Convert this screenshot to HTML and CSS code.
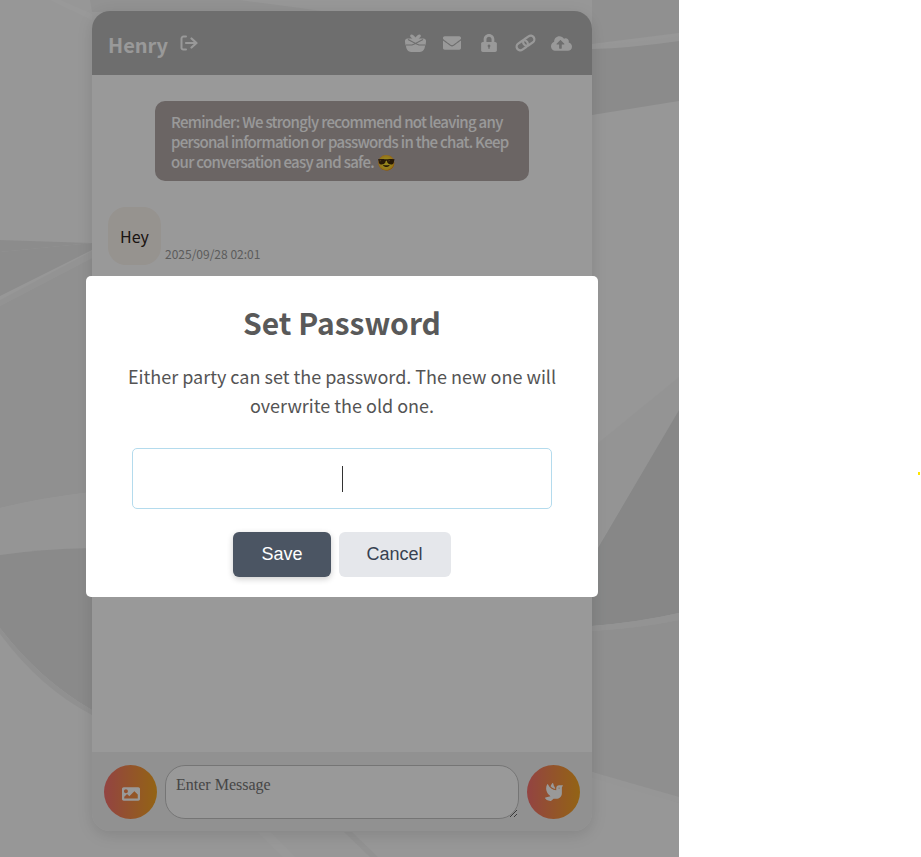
FILE: index.html
```html
<!DOCTYPE html>
<html lang="en">
<head>
<meta charset="utf-8">
<title>Chat</title>
<link rel="stylesheet" href="styles.css">
</head>
<body>
<div class="stage">
  <svg class="backdrop" viewBox="0 0 679 857" aria-hidden="true">
    <rect width="679" height="857" fill="#fcfcfc"/>
    <path d="M90 0H240L330 12H92Z" fill="#f3f3f3"/>
    <path d="M60 0L92 14V20L50 0Z" fill="#ffffff"/>
    <!-- left side -->
    <path d="M0 240L92 243L0 252Z" fill="#eaeaea"/>
    <path d="M0 252L92 243V250L0 296Z" fill="#e9e9e9"/>
    <path d="M0 300L92 251V258L0 306Z" fill="#f6f6f6"/>
    <path d="M0 306L92 258V492Q40 498 0 508Z" fill="#f0f0f0"/>
    <path d="M0 508Q40 498 92 492V548Q40 549 0 555Z" fill="#f8f8f8"/>
    <path d="M0 555Q40 549 92 548V710Q40 680 0 628Z" fill="#e6e6e6"/>
    <path d="M0 628Q40 680 92 710V715Q40 688 0 634Z" fill="#f1f1f1"/>
    <!-- right side -->
    <path d="M592 0H679V33L592 44Z" fill="#f1f1f1"/>
    <path d="M592 44Q630 44 679 36V41Q630 48 592 49Z" fill="#fbfbfb"/>
    <path d="M592 49Q630 48 679 41V101L592 115Z" fill="#e8e8e8"/>
    <path d="M679 377L592 448V557L679 410Z" fill="#f7f7f7"/>
    <path d="M679 410L592 558V626Q640 622 679 613Z" fill="#e1e2e2"/>
    <path d="M592 626Q640 622 679 613V620Q640 628 592 631Z" fill="#f5f5f5"/>
    <path d="M592 631Q640 628 679 620V803L592 772Z" fill="#efefef"/>
    <path d="M592 772L679 797V803L592 778Z" fill="#fafafa"/>
    <!-- bottom strip -->
    <path d="M270 832L295 857H283L258 832Z" fill="#ffffff"/>
    <path d="M352 832L378 857H370L344 832Z" fill="#f4f4f4"/>
  </svg>

  <main class="chat">
    <header class="chat-head">
      <div class="who">
        <span class="who-name">Henry</span>
        <svg class="icon-exit" viewBox="0 0 18 16" aria-hidden="true"><path d="M6 1.500H3.500A2 2 0 0 0 1.500 3.500V12A2 2 0 0 0 3.500 14.500H6" fill="none" stroke="currentColor" stroke-width="2" stroke-linecap="round"/><path d="M6 8H15M11.500 3.500L16.500 8L11.500 12.500" fill="none" stroke="currentColor" stroke-width="2.200" stroke-linecap="round" stroke-linejoin="round"/></svg>
      </div>
      <nav class="tools">
        <svg class="icon-gift" viewBox="0 0 21 18" aria-hidden="true"><path fill="currentColor" d="M6.500 0.500C8 0.500 9.500 2 10.500 3.500C11.500 2 13 .5 14.500 .5C16 .5 16.500 2.500 15 3.500L13.500 4.500H18.500C20 4.500 21 5.500 21 7C21 9 20.500 11 20 12C20 15 17.500 18 15 18H6C3.500 18 1 15 1 12C.5 11 0 9 0 7C0 5.500 1 4.500 2.500 4.500H7.500L6 3.500C4.500 2.500 5 .5 6.500 .5Z"/><path d="M3 5.500L10.500 9.500L18 5.500M1 11H7L10.500 9.500L14 11H20" fill="none" stroke="#b7b7b7" stroke-width="1.100"/></svg>
        <svg class="icon-mail" viewBox="0 0 512 512" aria-hidden="true"><path fill="currentColor" d="M502.3 190.8c3.900-3.100 9.700-.2 9.700 4.700V400c0 26.500-21.500 48-48 48H48c-26.500 0-48-21.500-48-48V195.600c0-5 5.700-7.800 9.700-4.700 22.400 17.400 52.100 39.500 154.100 113.600 21.100 15.400 56.700 47.800 92.200 47.600 35.700.3 72-32.800 92.300-47.600 102-74.100 131.600-96.300 154-113.700zM256 320c23.200.4 56.600-29.200 73.400-41.400 132.700-96.300 142.800-104.700 173.400-128.700 5.800-4.500 9.200-11.500 9.200-18.900v-19c0-26.500-21.500-48-48-48H48C21.500 64 0 85.500 0 112v19c0 7.400 3.400 14.300 9.200 18.900 30.600 23.900 40.700 32.400 173.400 128.700 16.800 12.200 50.200 41.800 73.400 41.400z"/></svg>
        <svg class="icon-lock" viewBox="0 0 448 512" aria-hidden="true"><path fill="currentColor" fill-rule="evenodd" d="M400 224h-24v-72C376 68.200 307.800 0 224 0S72 68.200 72 152v72H48c-26.500 0-48 21.500-48 48v192c0 26.500 21.500 48 48 48h352c26.500 0 48-21.500 48-48V272c0-26.500-21.500-48-48-48zm-104 0H152v-72c0-39.700 32.300-72 72-72s72 32.300 72 72v72zM224 296a40 40 0 0 0-20 74.600V416h40v-45.400A40 40 0 0 0 224 296z"/></svg>
        <svg class="icon-link" viewBox="0 0 21 18" aria-hidden="true"><g fill="none" stroke="currentColor" stroke-width="2.300" transform="rotate(-35 10.500 9)"><rect x="0.500" y="5.300" width="12" height="7.400" rx="3.700"/><rect x="8.500" y="5.300" width="12" height="7.400" rx="3.700"/></g></svg>
        <svg class="icon-cloud" viewBox="0 0 640 512" aria-hidden="true"><path fill="currentColor" d="M537.600 226.600c4.100-10.700 6.400-22.400 6.400-34.600 0-53-43-96-96-96-19.700 0-38.100 6-53.300 16.200C367 64.200 315.300 32 256 32c-88.400 0-160 71.600-160 160 0 2.700.1 5.400.2 8.100C40.200 219.800 0 273.200 0 336c0 79.500 64.500 144 144 144h368c70.700 0 128-57.300 128-128 0-61.900-44-113.600-102.400-125.400zM393.400 288H328v112c0 8.800-7.200 16-16 16h-48c-8.800 0-16-7.200-16-16V288h-65.400c-14.300 0-21.400-17.200-11.300-27.300l105.400-105.400c6.200-6.200 16.400-6.200 22.600 0l105.400 105.400c10.100 10.100 3 27.300-11.300 27.300z"/></svg>
      </nav>
    </header>

    <section class="chat-log">
      <p class="reminder">Reminder: We strongly recommend not leaving any personal information or passwords in the chat. Keep our conversation easy and safe. 😎</p>
      <div class="msg">
        <span class="bubble">Hey</span>
        <time class="stamp">2025/09/28 02:01</time>
      </div>
    </section>

    <footer class="composer">
      <button class="round-btn" type="button" aria-label="Send image">
        <svg class="icon-image" viewBox="0 0 512 512" aria-hidden="true"><path fill="currentColor" d="M464 448H48c-26.510 0-48-21.490-48-48V112c0-26.510 21.490-48 48-48h416c26.510 0 48 21.490 48 48v288c0 26.510-21.490 48-48 48zM112 120c-30.928 0-56 25.072-56 56s25.072 56 56 56 56-25.072 56-56-25.072-56-56-56zM64 384h384V272l-87.515-87.515c-4.686-4.686-12.284-4.686-16.971 0L208 320l-55.515-55.515c-4.686-4.686-12.284-4.686-16.971 0L64 336v48z"/></svg>
      </button>
      <textarea class="composer-input" placeholder="Enter Message"></textarea>
      <button class="round-btn" type="button" aria-label="Send message">
        <svg class="icon-dove" viewBox="0 0 512 512" aria-hidden="true"><path fill="currentColor" d="M288 167.200v-28.100c-28.200-36.300-47.100-79.300-54.100-125.200-2.100-13.500-19-18.800-27.800-8.300-21.100 24.900-37.700 54.100-48.900 86.500 34.200 38.300 80 64.600 130.800 75.100zM400 64c-44.200 0-80 35.900-80 80.100v59.400C215.600 197.300 127 133 87 41.800c-5.500-12.500-23.200-13.200-29-.9C41.400 76 32 115.200 32 156.600c0 70.800 34.100 136.900 85.100 185.900 13.200 12.700 26.100 23.200 38.900 32.800l-143.900 36C1.400 414-3.400 426.400 2.600 435.700 20 462.600 63 508.200 155.800 512c8 .3 16-2.600 22.100-7.900l65.200-56.100H320c88.400 0 160-71.500 160-159.900V128l32-64H400zm0 96.100c-8.800 0-16-7.200-16-16s7.200-16 16-16 16 7.200 16 16-7.200 16-16 16z"/></svg>
      </button>
    </footer>
  </main>

  <div class="overlay">
    <div class="modal" role="dialog" aria-labelledby="modal-title">
      <h2 class="modal-title" id="modal-title">Set Password</h2>
      <p class="modal-text">Either party can set the password. The new one will overwrite the old one.</p>
      <div class="modal-field"><span class="caret"></span></div>
      <div class="modal-actions">
        <button class="btn btn-save" type="button">Save</button>
        <button class="btn btn-cancel" type="button">Cancel</button>
      </div>
    </div>
  </div>
</div>
<span class="speck"></span>
</body>
</html>
```

FILE: styles.css
```css
* { box-sizing: border-box; }

html, body {
  margin: 0;
  height: 100%;
  background: #fff;
  overflow: hidden;
}

body {
  font-family: "Noto Sans CJK SC", "Noto Sans", sans-serif;
}

.stage {
  position: relative;
  width: 679px;
  height: 857px;
  overflow: hidden;
  padding: 11px 0 26px 5px;
  display: flex;
  justify-content: center;
}

.backdrop {
  position: absolute;
  inset: 0;
  width: 100%;
  height: 100%;
}

.chat {
  position: relative;
  width: 500px;
  height: 820px;
  display: flex;
  flex-direction: column;
  background: #fff;
  border-radius: 18px;
  overflow: hidden;
  box-shadow: 0 4px 16px rgba(0, 0, 0, .12);
}

.chat-head {
  flex: none;
  height: 64px;
  padding: 0 20px 0 16px;
  display: flex;
  align-items: center;
  justify-content: space-between;
  background: #b7b7b7;
  color: #fff;
}

.who {
  display: flex;
  align-items: center;
  gap: 12px;
}

.who-name {
  font-size: 20px;
  font-weight: 700;
  line-height: 28px;
  margin-top: 4px;
}

.icon-exit { width: 18px; height: 16px; margin-bottom: 1px; display: block; }

.tools {
  display: flex;
  align-items: center;
}

.tools svg { display: block; }
.icon-gift { width: 21px; height: 18px; }
.icon-mail { width: 18px; height: 18px; margin-left: 17px; }
.icon-lock { width: 16px; height: 18px; margin-left: 20px; }
.icon-link { width: 21px; height: 18px; margin-left: 18px; }
.icon-cloud { width: 21px; height: 17px; margin-left: 15px; }

.chat-log {
  flex: 1;
  padding: 26px 16px 0;
  display: flex;
  flex-direction: column;
}

.reminder {
  align-self: center;
  width: 374px;
  height: 80px;
  margin: 0;
  padding: 11px 16px 9px;
  background: #b2a8a7;
  border-radius: 10px;
  color: #fff;
  font-size: 15px;
  font-weight: 500;
  letter-spacing: -.7px;
  line-height: 20px;
}

.msg {
  margin-top: 26px;
  display: flex;
  align-items: flex-end;
  gap: 4px;
}

.bubble {
  width: 53px;
  height: 58px;
  display: flex;
  align-items: center;
  justify-content: center;
  padding-bottom: 1px;
  background: #fbf5ee;
  border-radius: 18px;
  color: #2d2320;
  font-size: 16px;
}

.stamp {
  color: #999;
  font-size: 12px;
  line-height: 22px;
}

.composer {
  flex: none;
  height: 79px;
  padding: 13px 12px 12px;
  display: flex;
  gap: 8px;
  background: #f2f2f2;
}

.round-btn {
  flex: none;
  width: 53px;
  height: 54px;
  padding: 0;
  border: 0;
  border-radius: 50%;
  display: flex;
  align-items: center;
  justify-content: center;
  background: linear-gradient(90deg, #f5716f, #f5a622);
  color: #fff;
}

.icon-image { width: 18px; height: 18px; margin-top: 3px; }
.icon-dove { width: 18px; height: 18px; }

.composer-input {
  flex: 1;
  min-width: 0;
  height: 54px;
  padding: 10px 10px;
  border: 1px solid #c4c4c4;
  border-radius: 20px;
  background: #fff;
  font-family: "Liberation Serif", serif;
  font-size: 16px;
  line-height: 18px;
  outline: none;
}

.composer-input::placeholder { color: #757575; }

.overlay {
  position: absolute;
  inset: 0;
  padding: 16px 0 0 5px;
  display: flex;
  align-items: center;
  justify-content: center;
  background: rgba(0, 0, 0, .4);
}

.modal {
  width: 512px;
  height: 321px;
  padding: 25px 0 0;
  display: flex;
  flex-direction: column;
  align-items: center;
  background: #fff;
  border-radius: 5px;
  color: #545454;
}

.modal-title {
  margin: 0;
  color: #595959;
  font-size: 30px;
  font-weight: 700;
  line-height: 42px;
}

.modal-text {
  width: 440px;
  margin: 19px 0 0;
  text-align: center;
  font-size: 18px;
  line-height: 29px;
}

.modal-field {
  width: 420px;
  height: 61px;
  margin-top: 28px;
  flex: none;
  display: flex;
  align-items: center;
  justify-content: center;
  border: 1px solid #b4dbed;
  border-radius: 5px;
}

.caret {
  width: 1px;
  height: 26px;
  background: #333;
}

.modal-actions {
  margin-top: 23px;
  display: flex;
  gap: 8px;
}

.btn {
  height: 45px;
  padding: 0 28px;
  border: 0;
  border-radius: 6px;
  font-family: "Liberation Sans", Arial, sans-serif;
  font-size: 18px;
}

.btn-save {
  background: #4b5563;
  color: #fff;
  box-shadow: 0 2px 6px rgba(0, 0, 0, .2);
}

.btn-cancel {
  background: #e5e7eb;
  color: #374151;
}

.speck {
  position: absolute;
  left: 918px;
  top: 472px;
  width: 2px;
  height: 3px;
  background: #ffe600;
}
```
